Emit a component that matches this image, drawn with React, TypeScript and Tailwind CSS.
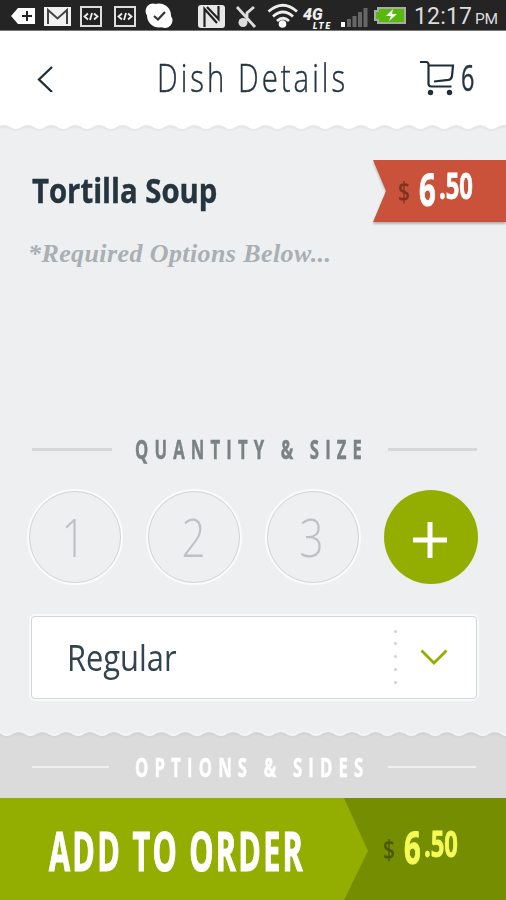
import type { ReactNode } from 'react'

const QUANTITIES = [
  { label: '1', shift: '-ml-[3px]' },
  { label: '2', shift: '-ml-[2px]' },
  { label: '3', shift: '-ml-[3px]' },
]

const WAVE = 23.8

// one long scalloped line: humps rise to `top`, dips fall to `bottom`
function scallop(start: number, top: number, bottom: number) {
  let d = `M${start} ${bottom}`
  for (let i = 0; i < 24; i++) {
    const x = start + i * WAVE
    d += ` C${x + 5} ${bottom} ${x + 6} ${top} ${x + WAVE / 2} ${top}`
    d += ` S${x + WAVE - 5} ${bottom} ${x + WAVE} ${bottom}`
  }
  return `${d} V30 H${start} Z`
}

function StatusBar() {
  return (
    <div className="h-[31px] shrink-0 border-b border-[#777] bg-[#242424]">
      <svg width="506" height="30" viewBox="0 0 506 30" fill="none" aria-hidden>
        <path d="M11 16 L18 8 H35 V24 H18 Z" fill="#fff" />
        <path d="M22 16 H32 M27 11 V21" stroke="#222" strokeWidth="2" />
        <rect x="44" y="7" width="27" height="19" fill="#f2f2f2" />
        <path d="M48 24 V10 L57.500 18.500 L67 10 V24" stroke="#444" strokeWidth="2" />
        {[80, 114].map(x => (
          <g key={x} transform={`translate(${x} 6)`}>
            <rect x="1" y="1" width="20" height="19" fill="#222" stroke="#ddd" strokeWidth="2" />
            <path d="M8 7.500 L4.500 10.500 L8 13.500 M14 7.500 L17.500 10.500 L14 13.500 M12 7 L10 14" stroke="#eee" strokeWidth="1.800" />
          </g>
        ))}
        <circle cx="159" cy="15.500" r="12" fill="#fff" />
        <circle cx="153" cy="11" r="7.500" fill="#fff" />
        <circle cx="165" cy="20.500" r="7.500" fill="#fff" />
        <path d="M154 16 L158 19.500 L165 12" stroke="#333" strokeWidth="2.200" />
        <rect x="198" y="5" width="27" height="23" rx="3" fill="#e8e8e8" />
        <path d="M204.500 27 V9 L217 23 M207 7 L218.500 19 V6" stroke="#222" strokeWidth="2.200" />
        <path d="M237 7 L255 27 M247 21 V13 L254 7" stroke="#ddd" strokeWidth="2.800" />
        <circle cx="243" cy="22.500" r="4.500" fill="#ddd" />
        <path d="M268.500 11.500 Q283 -1 297 11.500 M273 16.500 Q283 7.500 293 16.500 M277 21 Q283 15.500 289 21" stroke="#eee" strokeWidth="2.800" />
        <circle cx="282.500" cy="24" r="3.800" fill="#fff" />
        <rect x="341" y="22" width="4" height="5" fill="#fff" />
        <path d="M349 27 V19 M354.500 27 V16 M360 27 V12 M365.500 27 V8" stroke="#666" strokeWidth="4" />
        <path d="M378 8 H405 V23 H378 V20 H375 V11 H378 Z" fill="#58b80c" stroke="#aaa" strokeWidth="2" />
        <path d="M393 9 L386 16 H391 L389 21 L397 14 H392 Z" fill="#fff" />
        <text x="303" y="20" fill="#eee" fontFamily="Roboto, sans-serif" fontSize="16" fontWeight="900" fontStyle="italic">4G</text>
        <text x="313" y="28.500" fill="#fff" fontFamily="Roboto, sans-serif" fontSize="8.500" fontWeight="900" fontStyle="italic" textLength="17">LTE</text>
        <text x="414" y="24" fill="#ddd" fontFamily="Roboto, sans-serif" fontSize="23" textLength="58">12:17</text>
        <text x="475" y="24" fill="#ddd" fontFamily="Roboto, sans-serif" fontSize="15.500" textLength="23">PM</text>
      </svg>
    </div>
  )
}

function CartIcon() {
  return (
    <svg width="36" height="36" viewBox="0 0 36 36" fill="none" stroke="#1e2f3b" strokeWidth="2.200" aria-hidden>
      <path d="M0 2 H6 Q8.500 2 8.500 4.500 V23.500 Q8.500 26.500 11.500 26.500 H31.500" />
      <path d="M8.500 5.500 H33 L32 16 Q31.500 19.500 28.500 19.900 L14 21.500" />
      <circle cx="10.500" cy="32.500" r="2.700" fill="#1e2f3b" stroke="none" />
      <circle cx="29.500" cy="32.500" r="2.700" fill="#1e2f3b" stroke="none" />
    </svg>
  )
}

function Header() {
  return (
    <header className="flex h-[94px] shrink-0 items-center bg-white text-[#243440]">
      <button className="ml-[37px] w-[120px]" aria-label="Back">
        <svg width="16" height="28" viewBox="0 0 16 28" fill="none" stroke="#1e2f3b" strokeWidth="2.300">
          <path d="M15 3 L2 15.500 L15 28" />
        </svg>
      </button>
      <h1 className="mb-[3px] w-[263px] origin-left scale-x-[0.752] text-[39px] leading-none font-light tracking-[4px] whitespace-nowrap [-webkit-text-stroke:0.4px]">
        Dish Details
      </h1>
      <CartIcon />
      <span className="ml-[5px] origin-left scale-x-[0.650] text-[36px] leading-none [-webkit-text-stroke:0.4px]">6</span>
    </header>
  )
}

function SectionTitle({ children, light }: { children: ReactNode; light?: boolean }) {
  return (
    <div className="flex h-7 shrink-0 items-center">
      <div className={light ? 'ml-8 h-[2px] w-[77px] bg-[#f0f0f0]' : 'ml-8 h-[3px] w-[80px] bg-[#d5d7d8]'} />
      <div className={light ? 'ml-[26px] w-[253px]' : 'ml-[23px] w-[253px]'}>
        <h3
          className={
            light
              ? 'origin-left scale-x-[0.618] text-[27px] leading-7 font-bold tracking-[10px] whitespace-nowrap text-white [-webkit-text-stroke:0.5px]'
              : 'origin-left scale-x-[0.616] text-[27px] leading-7 font-bold tracking-[10px] whitespace-nowrap text-[#7b8284] [-webkit-text-stroke:0.5px]'
          }
        >
          {children}
        </h3>
      </div>
      <div className={light ? 'h-[2px] w-[88px] bg-[#f0f0f0]' : 'h-[3px] w-[89px] bg-[#d5d7d8]'} />
    </div>
  )
}

function Price() {
  return (
    <div className="flex items-start font-bold">
      <span className="mt-[16px] w-[21px] origin-left scale-x-[0.780] text-[27px] leading-8 font-semibold text-[#1d1200] opacity-45">$</span>
      <span className="mt-[7px] w-[20px] origin-left scale-x-[0.650] text-[45px] leading-[44px] [-webkit-text-stroke:1px]">6</span>
      <span className="mt-[6px] w-[40px] origin-left scale-x-[0.660] text-[36px] leading-10 [-webkit-text-stroke:0.8px]">.50</span>
    </div>
  )
}

export default function App() {
  return (
    <div className="flex h-[900px] w-[506px] flex-col overflow-hidden bg-[#edeff1] font-['Open_Sans','Noto_Sans',sans-serif]">
      <StatusBar />
      <Header />
      <svg width="506" height="7" viewBox="0 0 506 7" className="shrink-0 bg-white" aria-hidden>
        <path d={scallop(-8, 0, 4)} fill="#e5e7e9" />
        <path d={scallop(-8, 3, 6)} fill="#edeff1" />
      </svg>

      <section className="flex h-[93px] shrink-0 items-start pt-7">
        <h2 className="mt-[10px] ml-8 w-[341px] origin-left scale-x-[0.862] text-[34px] leading-10 font-bold whitespace-nowrap text-[#25343f] [-webkit-text-stroke:0.4px]">
          Tortilla Soup
        </h2>
        <div className="h-[65px] w-[133px] drop-shadow-[0_2px_1px_rgba(0,0,0,0.25)]">
          <div className="h-[62px] bg-[#ca513a] pl-[25px] text-white [clip-path:polygon(0_0,100%_0,100%_100%,0_100%,13px_50%)]">
            <Price />
          </div>
        </div>
      </section>

      <p className="mt-[11px] ml-[28px] h-[199px] shrink-0 font-['Liberation_Serif',serif] text-[26px] leading-9 font-bold tracking-[0.4px] whitespace-nowrap text-[#a9afb2] italic">
        *Required Options Below...
      </p>

      <SectionTitle>QUANTITY &amp; SIZE</SectionTitle>

      <div className="mt-[26px] ml-[27px] flex gap-[23px]">
        {QUANTITIES.map(q => (
          <button key={q.label} className="flex size-[96px] items-center justify-center rounded-full border-2 border-[#fafbfb] p-0">
            <span className="flex size-full items-center justify-center rounded-full border border-[#d3d6d8]">
              <span className={`${q.shift} -mt-[2px] scale-x-[0.780] text-[54px] leading-none font-light text-[#bcc1c5]`}>{q.label}</span>
            </span>
          </button>
        ))}
        <button className="mt-px flex size-[94px] items-center justify-center rounded-full bg-[#94ae00]" aria-label="More">
          <svg width="34" height="36" viewBox="0 0 34 36" stroke="#fff" strokeWidth="5" className="mt-[5px] -ml-[2px]">
            <path d="M0 18 H34 M17 0 V36" />
          </svg>
        </button>
      </div>

      <div className="mt-[29px] ml-[29px] w-[450px] rounded-[6px] border-2 border-[#f8f9f9]">
        <div className="flex h-[83px] items-center rounded-[4px] border border-[#d3d6d8] bg-white">
          <div className="ml-[35px] w-[328px] origin-left scale-x-[0.857] text-[36px] leading-none whitespace-nowrap text-[#33434f]">
            Regular
          </div>
          <div className="-mt-[2px] -ml-[1px] flex h-[54px] flex-col justify-between">
            {[0, 1, 2, 3, 4].map(i => (
              <i key={i} className="block size-[3px] rounded-full bg-[#ced1d3]" />
            ))}
          </div>
          <svg width="28" height="17" viewBox="0 0 28 17" fill="none" stroke="#94ae00" strokeWidth="2.800" className="ml-[23px]" aria-hidden>
            <path d="M1.500 1.500 L14 14 L26.500 1.500" />
          </svg>
        </div>
      </div>

      <svg width="506" height="8" viewBox="0 0 506 8" className="mt-[30px] shrink-0" aria-hidden>
        <path d={scallop(-17, 0, 3)} fill="#f5f6f7" />
        <path d={scallop(-17, 1, 5)} fill="#d5d5d5" />
        <path d={scallop(-17, 4, 7)} fill="#dbdbdb" />
      </svg>
      <div className="h-[59px] shrink-0 bg-[#dbdbdb] pt-[14px]">
        <SectionTitle light>OPTIONS &amp; SIDES</SectionTitle>
      </div>

      <footer className="flex h-[102px] shrink-0 bg-[#758d00]">
        <button className="h-full w-[368px] shrink-0 bg-[#94ae00] pl-[49px] text-left [clip-path:polygon(0_0,344px_0,100%_53px,344px_100%,0_100%)]">
          <span className="block w-[254px] origin-left scale-x-[0.576] text-[53px] leading-[106px] font-bold tracking-[4px] whitespace-nowrap text-white [-webkit-text-stroke:1.2px]">
            ADD TO ORDER
          </span>
        </button>
        <div className="mt-[20px] ml-[15px] text-[#f5fc55]">
          <Price />
        </div>
      </footer>
    </div>
  )
}
